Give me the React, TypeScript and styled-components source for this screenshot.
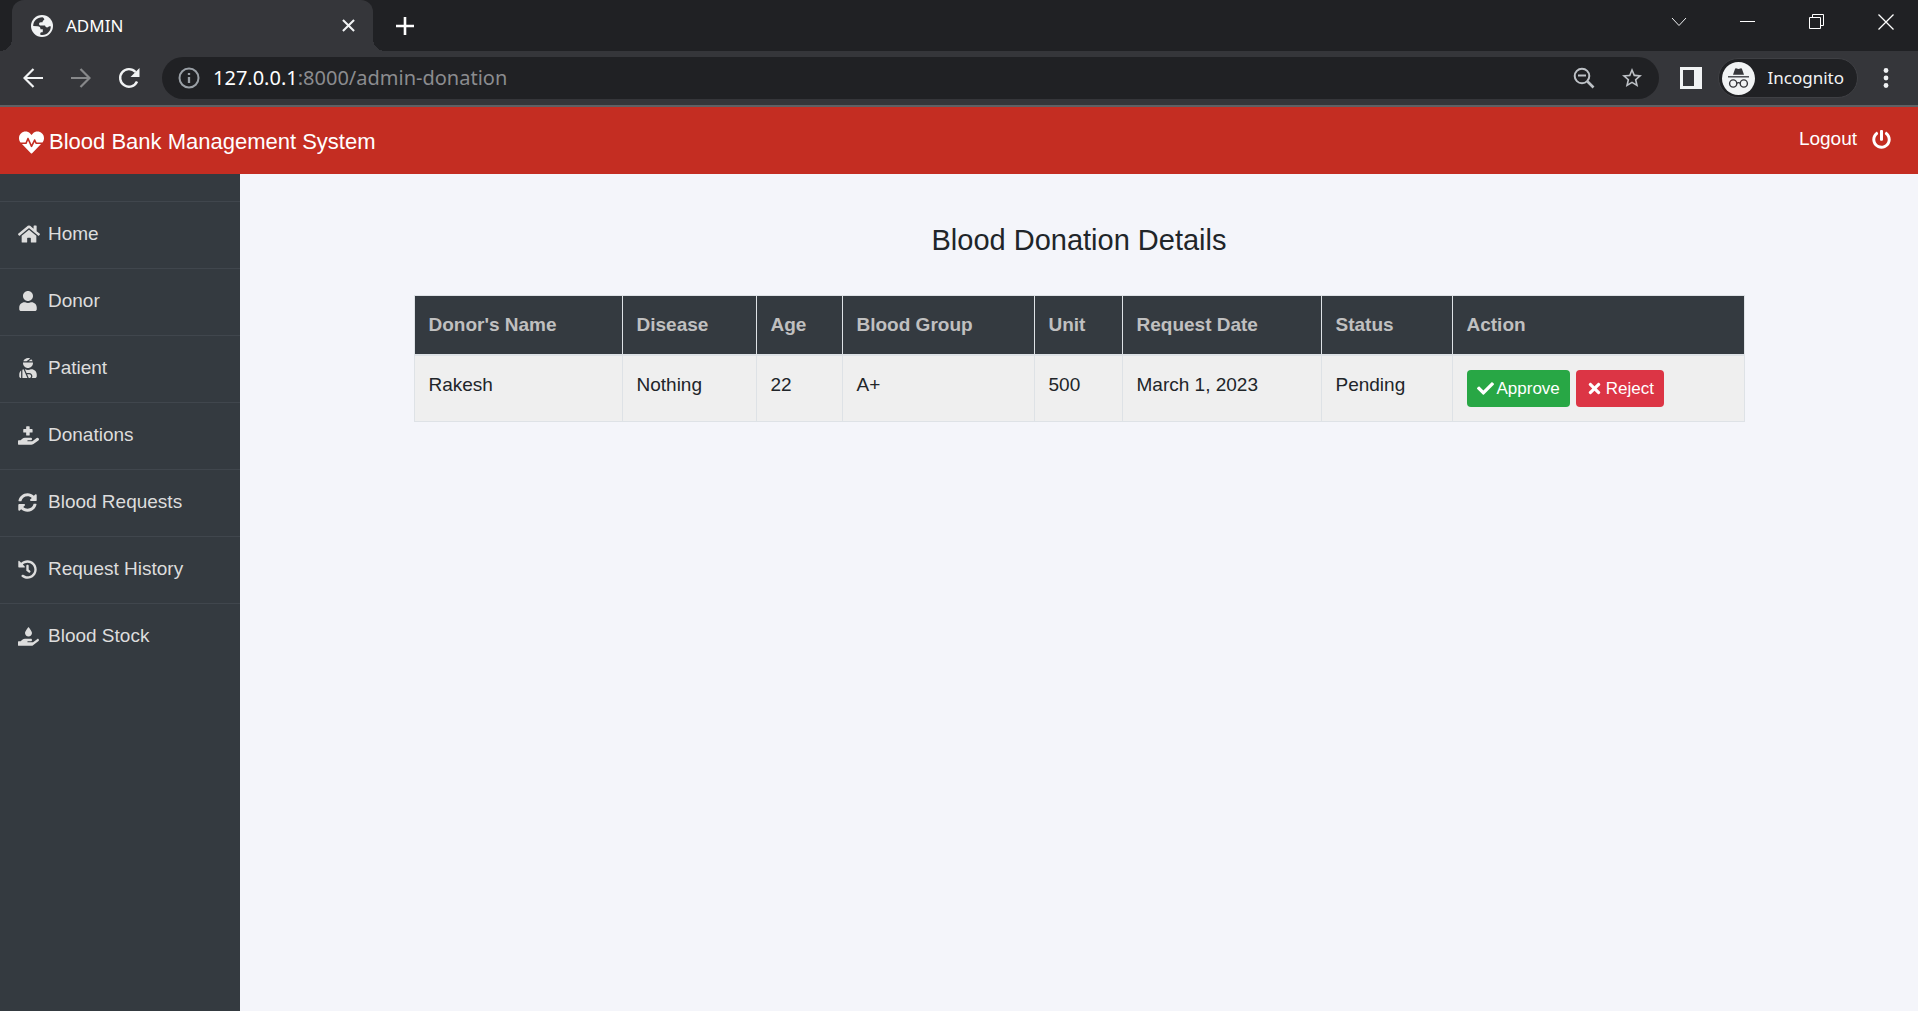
import React from "react";
import styled, { createGlobalStyle } from "styled-components";
import {
  FaHeartbeat,
  FaPowerOff,
  FaHome,
  FaUser,
  FaUserInjured,
  FaHandHoldingMedical,
  FaSyncAlt,
  FaHistory,
  FaHandHoldingWater,
  FaCheck,
  FaTimes,
} from "react-icons/fa";

const uiFont = `"Noto Sans", "Open Sans", sans-serif`;
const pageFont = `"Liberation Sans", Arial, sans-serif`;

const GlobalStyle = createGlobalStyle`
  *, *::before, *::after { box-sizing: border-box; }
  body { margin: 0; background: #f4f5fa; color: #212529; font-family: ${pageFont}; }
  button, input { font: inherit; }
`;

const Window = styled.div`
  display: flex;
  flex-direction: column;
  min-height: 100vh;
`;

/* ---------- browser chrome ---------- */

const IconButton = styled.button<{ $w?: number; $dim?: boolean }>`
  display: flex;
  align-items: center;
  justify-content: center;
  flex: none;
  width: ${(p) => p.$w ?? 48}px;
  height: 36px;
  padding: 0;
  border: 0;
  background: transparent;
  color: ${(p) => (p.$dim ? "#87888a" : "#f1f3f4")};
`;

const TabStrip = styled.header`
  display: flex;
  align-items: flex-start;
  height: 51px;
  padding-left: 12px;
  background: #202124;
`;

const Tab = styled.div`
  position: relative;
  display: flex;
  align-items: center;
  width: 361px;
  height: 51px;
  padding: 0 9px 0 19px;
  border-radius: 12px 12px 0 0;
  background: #35363a;
  color: #fff;
  font: 17px/24px ${uiFont};

  &::before,
  &::after {
    content: "";
    position: absolute;
    bottom: 0;
    width: 12px;
    height: 12px;
  }
  &::before {
    left: -12px;
    background: radial-gradient(circle at 0 0, transparent 12px, #35363a 12px);
  }
  &::after {
    right: -12px;
    background: radial-gradient(circle at 100% 0, transparent 12px, #35363a 12px);
  }
`;

const TabTitle = styled.span`
  flex: 1;
  margin-left: 13px;
`;

const NewTab = styled.div`
  display: flex;
  align-items: center;
  height: 51px;
  margin-left: 8px;
`;

const WindowControls = styled.div`
  display: flex;
  align-items: center;
  height: 43px;
  margin-right: -2px;
  margin-left: auto;
`;

const Toolbar = styled.div`
  display: flex;
  align-items: center;
  height: 56px;
  padding: 0 8px 0 9px;
  border-bottom: 2px solid #5f6064;
  background: #35363a;
`;

const AddressBar = styled.form`
  display: flex;
  align-items: center;
  flex: 1;
  height: 42px;
  margin: 0 9px;
  padding: 0 3px 0 15px;
  border-radius: 21px;
  background: #202124;
  color: #9aa0a6;
`;

const Url = styled.a`
  flex: 1;
  margin-left: 12px;
  color: #8b8c8f;
  font: 20px/28px ${uiFont};
  text-decoration: none;
`;

const UrlHost = styled.span`
  color: #fff;
`;

const Incognito = styled.button`
  display: flex;
  align-items: center;
  gap: 13px;
  height: 40px;
  margin: 0 4px 0 3px;
  padding: 0 13px 0 3px;
  border: 1px solid #3f4044;
  border-radius: 20px;
  background: #202124;
  color: #f1f3f4;
  font: 17px/24px ${uiFont};
`;

/* ---------- page ---------- */

const Navbar = styled.header`
  display: flex;
  align-items: flex-start;
  justify-content: space-between;
  height: 67px;
  padding: 18px 27px 0 19px;
  background: #c42d22;
  color: #fff;
`;

const Brand = styled.a`
  display: flex;
  align-items: center;
  gap: 5px;
  color: inherit;
  font-size: 22px;
  line-height: 34px;
  text-decoration: none;
  svg { width: 25px; height: 25px; }
`;

const Logout = styled.a`
  display: flex;
  align-items: center;
  gap: 15px;
  color: inherit;
  font-size: 19px;
  line-height: 28px;
  text-decoration: none;
  svg { width: 19px; height: 19px; }
`;

const Body = styled.div`
  display: flex;
  flex: 1;
`;

const Sidebar = styled.nav`
  flex: none;
  width: 240px;
  padding-top: 27px;
  background: #343a40;
`;

const Menu = styled.ul`
  margin: 0;
  padding: 0;
  list-style: none;
`;

const MenuItem = styled.li`
  display: flex;
  height: 67px;
  border-top: 1px solid #40464d;
`;

const MenuLink = styled.a`
  display: flex;
  align-items: center;
  flex: 1;
  padding: 0 18px 2px;
  color: #ddd;
  font-size: 19px;
  line-height: 28px;
  text-decoration: none;
`;

const MenuIcon = styled.span`
  display: flex;
  width: 30px;
`;

const Main = styled.main`
  flex: 1;
  padding: 48px 24px;
`;

const Container = styled.section`
  max-width: 1331px;
  margin: 0 auto;
`;

const Title = styled.h1`
  margin: 0 0 37px;
  font-size: 29px;
  font-weight: 400;
  line-height: 36px;
  text-align: center;
`;

const Table = styled.table`
  width: 100%;
  table-layout: fixed;
  border-collapse: collapse;
  border: 1px solid #dee2e6;
  font-size: 19px;
  line-height: 29px;
`;

const Col = styled.col<{ $w?: number }>`
  width: ${(p) => (p.$w ? `${p.$w}px` : "auto")};
`;

const Th = styled.th`
  padding: 14px 14px 15px;
  border: 1px solid #dee2e6;
  border-bottom-width: 2px;
  background: #343a40;
  color: #c0c0c0;
  text-align: left;
`;

const Td = styled.td`
  padding: 14px;
  border: 1px solid #dee2e6;
  background: #efefef;
  vertical-align: top;
`;

const Actions = styled.div`
  display: flex;
  gap: 6px;
`;

const ActionButton = styled.button<{ $tone: string }>`
  display: flex;
  align-items: center;
  gap: 3px;
  height: 37px;
  padding: 0 10px;
  border: 0;
  border-radius: 4px;
  background: ${(p) => p.$tone};
  color: #fff;
  font-size: 17px;
  line-height: 24px;
`;

const menu = [
  { label: "Home", icon: <FaHome size={22} /> },
  { label: "Donor", icon: <FaUser size={20} width={17} /> },
  { label: "Patient", icon: <FaUserInjured size={20} width={17} /> },
  { label: "Donations", icon: <FaHandHoldingMedical size={21} /> },
  { label: "Blood Requests", icon: <FaSyncAlt size={19} /> },
  { label: "Request History", icon: <FaHistory size={19} /> },
  { label: "Blood Stock", icon: <FaHandHoldingWater size={21} /> },
];

const columns = [
  { label: "Donor's Name", width: 208 },
  { label: "Disease", width: 134 },
  { label: "Age", width: 86 },
  { label: "Blood Group", width: 192 },
  { label: "Unit", width: 88 },
  { label: "Request Date", width: 199 },
  { label: "Status", width: 131 },
  { label: "Action", width: undefined },
];

const donations = [["Rakesh", "Nothing", "22", "A+", "500", "March 1, 2023", "Pending"]];

export default function App() {
  return (
    <Window>
      <GlobalStyle />
      <TabStrip>
        <Tab>
          <svg width="22" height="22" viewBox="0 0 22 22">
            <circle cx="11" cy="11" r="11" fill="#f1f3f4" />
            <path
              d="M11.500 2.200C6 2.200 2.200 6 2.200 11l4.300.2c2 0 3 1 3 3h2.300v2.300c0 1-1 1-2.500 1.200v2c6 1.500 10.500-3.200 10.500-8.200-1-.7-2.200-.3-2.800.8-1.500.5-2.500-.3-3-1.800H9.800c-2.300 0-2.300-3.300 0-3.300h1.700c.2-2 1.300-1.700 1.800-2.700.2-.8-.6-1.500-1.800-2.300z"
              fill="#35363a"
            />
          </svg>
          <TabTitle>ADMIN</TabTitle>
          <IconButton $w={32} aria-label="Close tab">
            <svg width="13" height="13" viewBox="0 0 14 14" stroke="currentColor" strokeWidth="2.200">
              <path d="M1 1l12 12M13 1L1 13" />
            </svg>
          </IconButton>
        </Tab>
        <NewTab>
          <IconButton aria-label="New tab">
            <svg width="18" height="18" viewBox="0 0 18 18" stroke="#fff" strokeWidth="2.600">
              <path d="M9 0v18M0 9h18" />
            </svg>
          </IconButton>
        </NewTab>
        <WindowControls>
          <IconButton $w={69} aria-label="Search tabs">
            <svg width="16" height="10" viewBox="0 0 16 10" fill="none" stroke="currentColor">
              <path d="M1 1l7 7.500L15 1" />
            </svg>
          </IconButton>
          <IconButton $w={69} aria-label="Minimize">
            <svg width="15" height="15" viewBox="0 0 15 15" stroke="#fff">
              <path d="M0 7.500h15" />
            </svg>
          </IconButton>
          <IconButton $w={69} aria-label="Restore">
            <svg width="15" height="15" viewBox="0 0 15 15" fill="none" stroke="#fff">
              <path d="M.5 3.500h11v11H.5zM3.500 3.500v-3h11v11h-3" />
            </svg>
          </IconButton>
          <IconButton $w={69} aria-label="Close">
            <svg width="16" height="16" viewBox="0 0 16 16" stroke="#fff" strokeWidth="1.300">
              <path d="M.5.500l15 15M15.500.500l-15 15" />
            </svg>
          </IconButton>
        </WindowControls>
      </TabStrip>

      <Toolbar>
        <IconButton aria-label="Back">
          <svg width="20" height="20" viewBox="0 0 20 20" fill="none" stroke="currentColor" strokeWidth="2.200">
            <path d="M20 10H2M10.500 1L1.500 10l9 9" />
          </svg>
        </IconButton>
        <IconButton $dim aria-label="Forward">
          <svg width="20" height="20" viewBox="0 0 20 20" fill="none" stroke="currentColor" strokeWidth="2.200">
            <path d="M0 10h18M9.500 1l9 9-9 9" />
          </svg>
        </IconButton>
        <IconButton aria-label="Reload">
          <svg width="22" height="22" viewBox="0 0 22 22" fill="none" stroke="currentColor" strokeWidth="2.400">
            <path d="M19 14.500A8.800 8.800 0 1 1 17.500 5" />
            <path d="M21.500 1v9h-9z" fill="currentColor" stroke="none" />
          </svg>
        </IconButton>
        <AddressBar>
          <svg width="24" height="24" viewBox="0 0 24 24" fill="none" stroke="currentColor" strokeWidth="2">
            <circle cx="12" cy="12" r="9.500" />
            <path d="M12 11v6M12 7v2" strokeWidth="2.300" />
          </svg>
          <Url href="#admin-donation">
            <UrlHost>127.0.0.1</UrlHost>:8000/admin-donation
          </Url>
          <IconButton type="button" aria-label="Zoom">
            <svg width="22" height="22" viewBox="0 0 22 22" fill="none" stroke="#bdc1c6" strokeWidth="2">
              <circle cx="9" cy="9" r="7.300" />
              <path d="M5 8.500h8" />
              <path d="M14.500 14.500l6 6" strokeWidth="2.600" />
            </svg>
          </IconButton>
          <IconButton type="button" aria-label="Bookmark this tab">
            <svg width="24" height="24" viewBox="0 0 24 24" fill="#bdc1c6">
              <path d="M22 9.240l-7.190-.62L12 2 9.190 8.630 2 9.240l5.460 4.730L5.820 21 12 17.270 18.180 21l-1.630-7.030L22 9.240zM12 15.400l-3.760 2.270 1-4.280-3.320-2.880 4.380-.38L12 6.100l1.710 4.040 4.380.38-3.320 2.880 1 4.280L12 15.400z" />
            </svg>
          </IconButton>
        </AddressBar>
        <IconButton $w={47} aria-label="Side panel">
          <svg width="22" height="22" viewBox="0 0 22 22">
            <path d="M0 0h22v22H0zM3 3v16h11V3z" fill="#f1f3f4" fillRule="evenodd" />
          </svg>
        </IconButton>
        <Incognito>
          <svg width="33" height="33" viewBox="0 0 33 33">
            <circle cx="16.500" cy="16.500" r="16.500" fill="#f1f3f4" />
            <path d="M11 12.700l2-5.700c.3-.9 1-.8 1.600-.500 1.400.6 2.400.6 3.800 0 .6-.3 1.300-.4 1.600.500l2 5.700z" fill="#35363a" />
            <path d="M6 14.800h21" stroke="#35363a" strokeWidth="1.300" />
            <g fill="none" stroke="#35363a" strokeWidth="1.400">
              <circle cx="11.200" cy="21.500" r="3.600" />
              <circle cx="21.800" cy="21.500" r="3.600" />
              <path d="M14.800 21.300c1-.8 2.400-.8 3.400 0" />
            </g>
          </svg>
          Incognito
        </Incognito>
        <IconButton aria-label="Menu">
          <svg width="6" height="20" viewBox="0 0 6 20" fill="currentColor">
            <circle cx="3" cy="2.500" r="2.400" />
            <circle cx="3" cy="10" r="2.400" />
            <circle cx="3" cy="17.500" r="2.400" />
          </svg>
        </IconButton>
      </Toolbar>

      <Navbar>
        <Brand href="#home">
          <FaHeartbeat />
          Blood Bank Management System
        </Brand>
        <Logout href="#logout">
          Logout
          <FaPowerOff />
        </Logout>
      </Navbar>

      <Body>
        <Sidebar>
          <Menu>
            {menu.map((m) => (
              <MenuItem key={m.label}>
                <MenuLink href="#menu">
                  <MenuIcon>{m.icon}</MenuIcon>
                  {m.label}
                </MenuLink>
              </MenuItem>
            ))}
          </Menu>
        </Sidebar>
        <Main>
          <Container>
            <Title>Blood Donation Details</Title>
            <Table>
              <colgroup>
                {columns.map((c) => (
                  <Col key={c.label} $w={c.width} />
                ))}
              </colgroup>
              <thead>
                <tr>
                  {columns.map((c) => (
                    <Th key={c.label} scope="col">{c.label}</Th>
                  ))}
                </tr>
              </thead>
              <tbody>
                {donations.map((row) => (
                  <tr key={row[0]}>
                    {row.map((cell) => (
                      <Td key={cell}>{cell}</Td>
                    ))}
                    <Td>
                      <Actions>
                        <ActionButton $tone="#28a745"><FaCheck size={17} />Approve</ActionButton>
                        <ActionButton $tone="#dc3545"><FaTimes size={17} width={13} />Reject</ActionButton>
                      </Actions>
                    </Td>
                  </tr>
                ))}
              </tbody>
            </Table>
          </Container>
        </Main>
      </Body>
    </Window>
  );
}
